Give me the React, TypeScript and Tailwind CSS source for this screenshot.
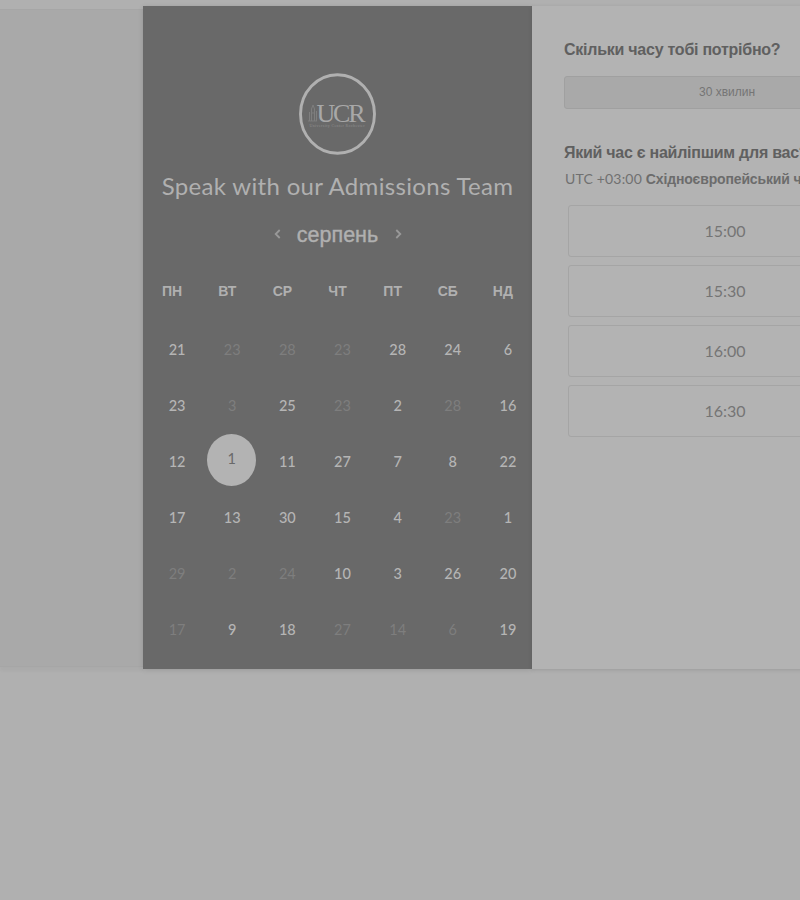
type Day = { n: number; off?: boolean; selected?: boolean };

const on = (n: number): Day => ({ n });
const off = (n: number): Day => ({ n, off: true });

const weekdays = ['ПН', 'ВТ', 'СР', 'ЧТ', 'ПТ', 'СБ', 'НД'];

const days: Day[] = [
  on(21), off(23), off(28), off(23), on(28), on(24), on(6),
  on(23), off(3), on(25), off(23), on(2), off(28), on(16),
  on(12), { n: 1, selected: true }, on(11), on(27), on(7), on(8), on(22),
  on(17), on(13), on(30), on(15), on(4), off(23), on(1),
  off(29), off(2), off(24), on(10), on(3), on(26), on(20),
  off(17), on(9), on(18), off(27), off(14), off(6), on(19),
];

const times = ['15:00', '15:30', '16:00', '16:30'];

function Logo() {
  return (
    <svg className="mt-[67px] h-[82px] w-[78px] shrink-0" viewBox="0 0 78 82">
      <ellipse cx="38.5" cy="41" rx="37" ry="39.2" fill="none" stroke="#b0b0b0" strokeWidth="2.9" />
      <path
        d="M10.5 48V39M12.5 48V36L14 32L15.5 36V48M17.5 48V38M9 48H18M12.5 40H15.5"
        fill="none"
        stroke="#808080"
        strokeWidth="0.9"
      />
      <text x="17.5" y="48.5" textLength="49" lengthAdjust="spacing" fontSize="26" fill="#a8a8a8" fontFamily="'Liberation Serif', serif">
        UCR
      </text>
      <text x="10.5" y="53.5" textLength="55" fontSize="4" fill="#8e8e8e" fontFamily="'Liberation Serif', serif">
        University Center Rochester
      </text>
    </svg>
  );
}

function Chevron({ d }: { d: string }) {
  return (
    <svg className="h-[10px] w-[7px]" viewBox="0 0 7 10" fill="none" stroke="#999999" strokeWidth="1.8">
      <path d={d} />
    </svg>
  );
}

function DayCell({ day }: { day: Day }) {
  if (day.selected) {
    return (
      <div className="flex items-center justify-center">
        <span className="-mt-[4px] mr-[1px] flex h-[52px] w-[49px] shrink-0 items-center justify-center rounded-[50%] bg-[#b3b3b3] pb-[1px] text-[#696969]">
          {day.n}
        </span>
      </div>
    );
  }
  return (
    <div className={`flex items-center justify-center ${day.off ? 'text-[#7e7e7e]' : 'font-medium text-[#b5b5b5]'}`}>
      {day.n}
    </div>
  );
}

function Calendar() {
  return (
    <section className="flex h-[663px] w-[389px] shrink-0 flex-col items-center bg-[#696969] shadow-[0_1px_5px_rgba(0,0,0,0.13)]">
      <Logo />
      <h1 className="mt-[14px] h-[34px] whitespace-nowrap font-['Lato',sans-serif] text-[24px] leading-[34px] tracking-[0.33px] text-[#b0b0b0]">
        Speak with our Admissions Team
      </h1>
      <div className="mt-[16px] flex h-[30px] w-[128px] items-center justify-between">
        <Chevron d="M5.7 1L1.7 5L5.7 9" />
        <span className="relative top-px font-['Liberation_Sans',sans-serif] text-[21.5px] leading-[30px] text-[#b0b0b0] [-webkit-text-stroke:0.4px_#b0b0b0]">
          серпень
        </span>
        <Chevron d="M1.3 1L5.3 5L1.3 9" />
      </div>
      <div className="mt-[32px] grid h-[20px] w-[386px] grid-cols-7 font-['Liberation_Sans',sans-serif] text-[14px] font-bold leading-[20px] text-[#b0b0b0]">
        {weekdays.map((w) => (
          <div key={w} className="text-center">{w}</div>
        ))}
      </div>
      <div className="mt-[20.8px] ml-[10px] grid w-[386px] shrink-0 grid-cols-7 grid-rows-[repeat(6,56px)] font-['Lato',sans-serif] text-[14.5px]">
        {days.map((d, i) => (
          <DayCell key={i} day={d} />
        ))}
      </div>
    </section>
  );
}

function Options() {
  return (
    <section className="flex h-[663px] w-[355px] shrink-0 flex-col bg-[#b3b3b3] pl-[32px] font-['Liberation_Sans',sans-serif] text-[#606060] shadow-[0_1px_4px_rgba(0,0,0,0.12)]">
      <h2 className="mt-[32px] h-6 whitespace-nowrap text-[16px] font-bold leading-6 tracking-[-0.25px]">
        Скільки часу тобі потрібно?
      </h2>
      <button className="mt-[14px] flex h-[33px] w-[326px] items-center justify-center rounded-[3px] border border-[#a0a0a0] bg-[#a9a9a9] pb-[2px] text-[12px] text-[#757575]">
        30 хвилин
      </button>
      <h2 className="mt-[32px] h-6 whitespace-nowrap text-[16px] font-bold leading-6 tracking-[-0.26px]">
        Який час є найліпшим для вас?
      </h2>
      <p className="mt-[4px] h-5 whitespace-nowrap pl-[1px] text-[14px] leading-5 text-[#707070]">
        <span className="font-['Lato',sans-serif] tracking-[0.18px]">UTC +03:00</span>{' '}
        <b className="tracking-[-0.15px] text-[#6c6c6c]">Східноєвропейський час</b>
      </p>
      <div className="mt-[15.5px] ml-[3.5px] flex w-[315px] flex-col gap-[8px]">
        {times.map((t) => (
          <button
            key={t}
            className="h-[52.2px] rounded-[3px] border border-[#a5a5a5] font-['Lato',sans-serif] text-[16px] text-[#757575]"
          >
            {t}
          </button>
        ))}
      </div>
    </section>
  );
}

export default function App() {
  return (
    <main className="h-[900px] w-[800px] overflow-hidden bg-[#b0b0b0] pt-[6px]">
      <div className="flex">
        <div className="mt-[3px] h-[658px] w-[143px] shrink-0 border-y border-[#a6a6a6] bg-[#a9a9a9] shadow-[0_4px_3px_rgba(0,0,0,0.03)]" />
        <Calendar />
        <Options />
      </div>
    </main>
  );
}
